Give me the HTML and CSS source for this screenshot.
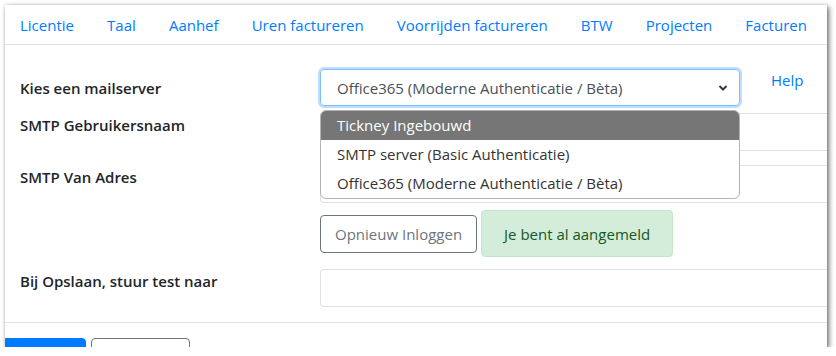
FILE: index.html
```html
<!DOCTYPE html>
<html lang="nl">
<head>
    <meta charset="UTF-8">
    <title>Mailserver instellingen</title>
    <link rel="stylesheet" href="styles.css">
</head>
<body>
<div class="window">
    <div class="nav">
        <a href="#">Licentie</a>
        <a href="#">Taal</a>
        <a href="#">Aanhef</a>
        <a href="#">Uren factureren</a>
        <a href="#">Voorrijden factureren</a>
        <a href="#">BTW</a>
        <a href="#">Projecten</a>
        <a href="#">Facturen</a>
    </div>

    <div class="form">
        <div class="row row-select">
            <label class="label label-middle">Kies een mailserver</label>
            <div class="control control-select">
                <div class="select">
                    <span>Office365 (Moderne Authenticatie / Bèta)</span>
                    <svg class="chevron" width="10" height="8" viewBox="0 0 10 8">
                        <path d="M1.5 2 L5 5.5 L8.5 2" fill="none" stroke="#343a40" stroke-width="2"/>
                    </svg>
                </div>
                <a href="#" class="help">Help</a>
            </div>
        </div>
        <div class="row row-user">
            <label class="label">SMTP Gebruikersnaam</label>
            <div class="control"><div class="input"></div></div>
        </div>
        <div class="row row-from">
            <label class="label">SMTP Van Adres</label>
            <div class="control"><div class="input"></div></div>
        </div>
        <div class="row row-login">
            <div class="label"></div>
            <div class="control control-login">
                <button class="btn-outline">Opnieuw Inloggen</button>
                <div class="alert">Je bent al aangemeld</div>
            </div>
        </div>
        <div class="row row-test">
            <label class="label">Bij Opslaan, stuur test naar</label>
            <div class="control"><div class="input"></div></div>
        </div>
    </div>

    <!-- footer buttons fall mostly below the visible window -->
    <div class="footer">
        <button class="btn-primary" aria-label="Opslaan"></button>
        <button class="btn-outline btn-cancel" aria-label="Annuleren"></button>
    </div>

    <!-- open native dropdown of the select -->
    <div class="dropdown">
        <div class="option selected">Tickney Ingebouwd</div>
        <div class="option">SMTP server (Basic Authenticatie)</div>
        <div class="option">Office365 (Moderne Authenticatie / Bèta)</div>
    </div>
</div>
</body>
</html>
```

FILE: styles.css
```css
html, body {
    margin: 0;
    padding: 0;
    background: #fff;
}

body {
    font-family: "Open Sans", "Noto Sans", sans-serif;
    font-size: 15px;
    color: #212529;
}

.window {
    position: relative;
    width: 822px;
    height: 342px;
    margin: 5px 0 0 5px;
    background: #fff;
    overflow: hidden;
    box-shadow: 2px 2px 5px rgba(0, 0, 0, 0.55), 0 0 3px rgba(0, 0, 0, 0.15);
}

.nav {
    display: flex;
    justify-content: space-between;
    align-items: center;
    height: 39px;
    padding: 0 20px 0 15px;
    border-bottom: 1px solid #dee2e6;
}

.nav a {
    color: #007bff;
    text-decoration: none;
}

.form {
    padding: 24px 0 15px 15px;
    border-bottom: 1px solid #dee2e6;
}

.row {
    display: flex;
}

.label {
    width: 300px;
    flex: none;
    font-weight: 600;
    padding-top: 2px;
}

.label-middle {
    align-self: center;
    padding-top: 0;
}

.control {
    flex: 1;
}

.row-select { margin-bottom: 7px; }
.row-user { margin-bottom: 14px; }
.row-from { margin-bottom: 7px; }
.row-login { margin-bottom: 12px; }

.control-select {
    display: flex;
    align-items: flex-start;
}

.select {
    box-sizing: border-box;
    width: 420px;
    height: 37px;
    display: flex;
    align-items: center;
    justify-content: space-between;
    padding: 0 11px 0 16px;
    border: 1px solid #80bdff;
    border-radius: 4px;
    box-shadow: 0 0 0 2px rgba(0, 123, 255, 0.25);
    color: #495057;
}

.help {
    color: #007bff;
    text-decoration: none;
    margin: 1px 0 0 31px;
}

.input {
    height: 36px;
    border: 1px solid #dee2e6;
    border-right: none;
    border-radius: 4px 0 0 4px;
}

.control-login {
    display: flex;
    align-items: center;
    gap: 4px;
}

.btn-outline {
    font: inherit;
    height: 38px;
    padding: 0 14px;
    background: #fff;
    border: 1px solid #6c757d;
    border-radius: 4px;
    color: #6c757d;
}

.alert {
    box-sizing: border-box;
    width: 192px;
    height: 47px;
    display: flex;
    align-items: center;
    justify-content: center;
    background: #d4edda;
    border: 1px solid #c3e6cb;
    border-radius: 4px;
    color: #155724;
}

.footer {
    display: flex;
    gap: 5px;
    padding-top: 15px;
}

.btn-primary {
    font: inherit;
    width: 81px;
    height: 38px;
    background: #007bff;
    color: #fff;
    border: 1px solid #007bff;
    border-radius: 0 4px 4px 0;
}

.btn-cancel {
    width: 99px;
}

.dropdown {
    position: absolute;
    left: 315px;
    top: 105px;
    width: 420px;
    box-sizing: border-box;
    background: #fff;
    border: 1px solid #b4b4b4;
    border-radius: 6px;
    overflow: hidden;
    color: #333;
}

.option {
    height: 29px;
    line-height: 29px;
    padding-left: 16px;
}

.option.selected {
    background: #767676;
    color: #fff;
}
```
